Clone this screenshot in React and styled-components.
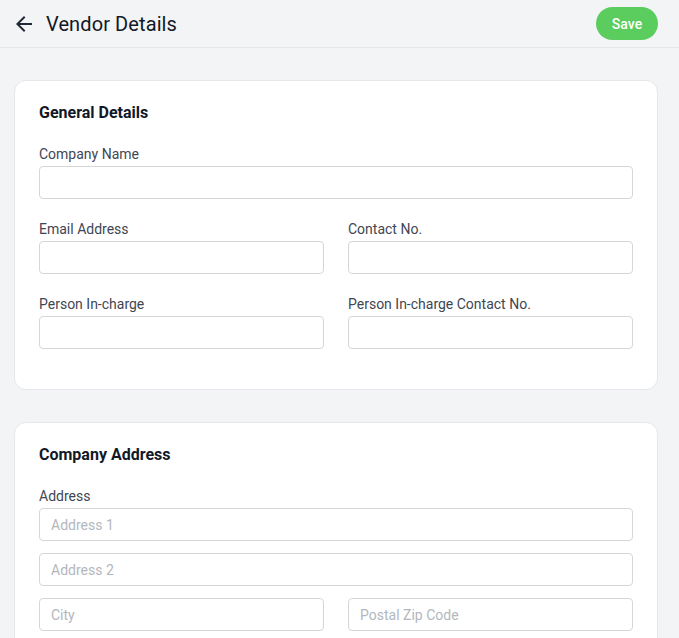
import React from 'react';
import styled, { createGlobalStyle } from 'styled-components';
import { MdArrowBack } from 'react-icons/md';

const GlobalStyle = createGlobalStyle`
    * {
        box-sizing: border-box;
    }

    body {
        margin: 0;
        background: #f3f4f6;
        font-family: Roboto, "Liberation Sans", Arial, sans-serif;
        color: #111827;
    }
`;

const PAGE = styled.div`
    min-height: 100vh;
    background: #f3f4f6;
`;

const HEADER = styled.header`
    height: 48px;
    display: flex;
    align-items: center;
    justify-content: space-between;
    padding: 0 21px 0 12px;
    border-bottom: 1px solid #e5e7eb;
`;

const TITLEGROUP = styled.div`
    display: flex;
    align-items: center;
    gap: 10px;

    h1 {
        margin: 0;
        font-size: 20px;
        font-weight: 400;
        color: #111827;
        letter-spacing: 0.1px;
    }
`;

const BACK = styled.button`
    display: flex;
    align-items: center;
    justify-content: center;
    padding: 0;
    border: none;
    background: transparent;
    color: #1f2937;
    cursor: pointer;
`;

const SAVE = styled.button`
    height: 33px;
    width: 62px;
    border: none;
    border-radius: 17px;
    background: #5bcc5e;
    color: #ffffff;
    font-family: inherit;
    font-size: 14px;
    font-weight: 500;
    cursor: pointer;
`;

const CONTENT = styled.main`
    padding: 32px 21px 32px 14px;
    display: flex;
    flex-direction: column;
    gap: 32px;
`;

const CARD = styled.section`
    background: #ffffff;
    border: 1px solid #e5e7eb;
    border-radius: 12px;
    padding: 20px 24px 20px;

    h2 {
        margin: 0 0 19px;
        font-size: 16px;
        line-height: 24px;
        font-weight: 700;
        color: #111827;
    }
`;

const ROW = styled.div`
    display: grid;
    grid-template-columns: ${props => (props.cols === 2 ? '1fr 1fr' : '1fr')};
    gap: 24px;
`;

const FIELD = styled.div`
    display: flex;
    flex-direction: column;
    margin-bottom: ${props => (props.tight ? '12px' : '20px')};
`;

const STACK = styled.div`
    display: flex;
    flex-direction: column;
    gap: 12px;
`;

const LABEL = styled.label`
    font-size: 14px;
    line-height: 20px;
    color: #3f4653;
    margin-bottom: 2px;
`;

const INPUT = styled.input`
    width: 100%;
    height: 33px;
    border: 1px solid #d4d6da;
    border-radius: 4px;
    padding: 0 11px;
    font-family: inherit;
    font-size: 14px;
    color: #111827;
    background: #ffffff;
    outline: none;

    &::placeholder {
        color: #b3b7bd;
    }
`;

const App = () => {
    return (
        <PAGE>
            <GlobalStyle />
            <HEADER>
                <TITLEGROUP>
                    <BACK aria-label="Back">
                        <MdArrowBack size={24} />
                    </BACK>
                    <h1>Vendor Details</h1>
                </TITLEGROUP>
                <SAVE>Save</SAVE>
            </HEADER>
            <CONTENT>
                <CARD>
                    <h2>General Details</h2>
                    <FIELD>
                        <LABEL>Company Name</LABEL>
                        <INPUT />
                    </FIELD>
                    <ROW cols={2}>
                        <FIELD>
                            <LABEL>Email Address</LABEL>
                            <INPUT />
                        </FIELD>
                        <FIELD>
                            <LABEL>Contact No.</LABEL>
                            <INPUT />
                        </FIELD>
                    </ROW>
                    <ROW cols={2}>
                        <FIELD>
                            <LABEL>Person In-charge</LABEL>
                            <INPUT />
                        </FIELD>
                        <FIELD>
                            <LABEL>Person In-charge Contact No.</LABEL>
                            <INPUT />
                        </FIELD>
                    </ROW>
                </CARD>
                <CARD>
                    <h2>Company Address</h2>
                    <FIELD tight>
                        <LABEL>Address</LABEL>
                        <STACK>
                            <INPUT placeholder="Address 1" />
                            <INPUT placeholder="Address 2" />
                        </STACK>
                    </FIELD>
                    <ROW cols={2}>
                        <FIELD>
                            <INPUT placeholder="City" />
                        </FIELD>
                        <FIELD>
                            <INPUT placeholder="Postal Zip Code" />
                        </FIELD>
                    </ROW>
                    <ROW cols={2}>
                        <FIELD>
                            <INPUT placeholder="State" />
                        </FIELD>
                        <FIELD>
                            <INPUT placeholder="Country" />
                        </FIELD>
                    </ROW>
                </CARD>
            </CONTENT>
        </PAGE>
    );
}

export default App;
